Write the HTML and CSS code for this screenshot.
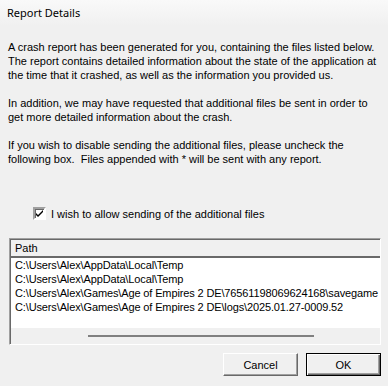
FILE: index.html
```html
<!DOCTYPE html>
<html lang="en">
<head>
    <meta charset="UTF-8">
    <title>Report Details</title>
    <link rel="stylesheet" href="styles.css">
</head>
<body>
    <div class="dialog">
        <div class="title">Report Details</div>

        <div class="message">
            <p>A crash report has been generated for you, containing the files listed below.<br>
            The report contains detailed information about the state of the application at<br>
            the time that it crashed, as well as the information you provided us.</p>
            <p>In addition, we may have requested that additional files be sent in order to<br>
            get more detailed information about the crash.</p>
            <p>If you wish to disable sending the additional files, please uncheck the<br>
            following box.&nbsp; Files appended with * will be sent with any report.</p>
        </div>

        <label class="check">
            <span class="box">
                <svg width="9" height="9" viewBox="0 0 9 9"><path d="M1 4 L3 6 L8 1 L8 3 L3 8 L1 6 Z" fill="#000"/></svg>
            </span>
            I wish to allow sending of the additional files
        </label>

        <div class="list">
            <div class="list-head">Path</div>
            <div class="list-body">
                <div class="row">C:\Users\Alex\AppData\Local\Temp</div>
                <div class="row">C:\Users\Alex\AppData\Local\Temp</div>
                <div class="row">C:\Users\Alex\Games\Age of Empires 2 DE\76561198069624168\savegame</div>
                <div class="row">C:\Users\Alex\Games\Age of Empires 2 DE\logs\2025.01.27-0009.52</div>
            </div>
            <div class="hscroll"><div class="thumb"></div></div>
        </div>

        <div class="buttons">
            <button class="btn">Cancel</button>
            <button class="btn default">OK</button>
        </div>
    </div>
</body>
</html>
```

FILE: styles.css
```css
:root {
    --face: #f0f0f0;
    --shadow: #a0a0a0;
    --dark: #696969;
}

body {
    margin: 0;
    background-color: var(--face);
    font-family: "Liberation Sans", Arial, sans-serif;
    font-size: 11px;
    color: #000;
}

.dialog {
    width: 388px;
    height: 386px;
}

/* --- cabeçalho --- */
.title {
    height: 26px;
    line-height: 26px;
    padding-left: 7px;
    font-family: "Noto Sans", sans-serif;
    font-size: 11px;
    background: linear-gradient(#f9f9f9, var(--face));
}

.message {
    padding: 14px 8px 0;
}

.message p {
    margin: 0 0 14px;
    line-height: 14px;
    white-space: nowrap;
}

/* --- checkbox --- */
.check {
    display: flex;
    align-items: center;
    gap: 5px;
    margin: 41px 0 0 33px;
    height: 13px;
}

.box {
    width: 9px;
    height: 9px;
    background: #fff;
    border: 2px solid;
    border-color: var(--shadow) #fff #fff var(--shadow);
    box-shadow: inset 1px 1px 0 var(--dark);
    display: flex;
    align-items: center;
    justify-content: center;
}

/* --- lista --- */
.list {
    margin: 18px 7px 0 9px;
    height: 105px;
    border: 1px solid;
    border-color: var(--shadow) #fff #fff var(--shadow);
    box-shadow: inset 1px 1px 0 var(--dark);
    display: flex;
    flex-direction: column;
}

.list-head {
    height: 16px;
    line-height: 16px;
    padding-left: 4px;
    margin-left: 1px;
    border-top: 1px solid var(--dark);
    border-bottom: 2px solid var(--dark);
    background: var(--face);
}

.list-body {
    flex: 1;
    background: #fff;
    margin-left: 1px;
}

.row {
    line-height: 14px;
    padding-left: 4px;
    letter-spacing: -0.13px;
    white-space: nowrap;
    overflow: hidden;
}

.hscroll {
    height: 16px;
    margin-left: 1px;
    background: var(--face);
    display: flex;
    align-items: center;
}

.thumb {
    margin-left: 77px;
    width: 226px;
    height: 2px;
    background: #808080;
}

/* --- botões --- */
.buttons {
    display: flex;
    justify-content: flex-end;
    gap: 8px;
    margin: 8px 7px 0 0;
}

.btn {
    width: 75px;
    height: 23px;
    padding: 0;
    font-family: "Liberation Sans", Arial, sans-serif;
    font-size: 11px;
    color: #000;
    background: var(--face);
    border: 1px solid;
    border-color: #fff var(--dark) var(--dark) #fff;
    box-shadow: inset -1px -1px 0 var(--shadow);
}

.btn.default {
    border: 1px solid #000;
    box-shadow: inset 1px 1px 0 #fff, inset -1px -1px 0 var(--dark), inset -2px -2px 0 var(--shadow);
}
```
